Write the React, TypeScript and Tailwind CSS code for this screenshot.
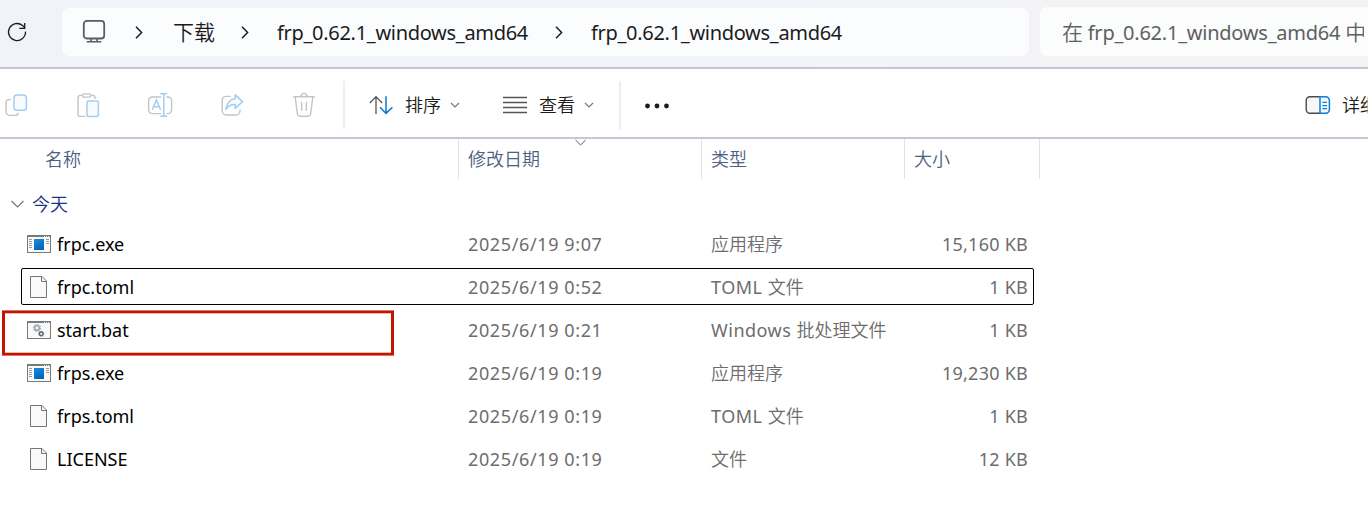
import type { ReactNode } from "react";

const latin = "font-['Noto_Sans','Noto_Sans_CJK_SC',sans-serif]";

function Svg({ w, h, className = "", children }: { w: number; h: number; className?: string; children: ReactNode }) {
  return (
    <svg width={w} height={h} viewBox={`0 0 ${w} ${h}`} fill="none" className={`shrink-0 ${className}`}>
      {children}
    </svg>
  );
}

const GRAY = "#c4c4c4";
const BLUE = "#a3cdf0";

function Refresh() {
  return (
    <Svg w={22} h={22}>
      <path d="M19.5 10.6A8.5 8.5 0 1 1 16.6 4.6L18.8 6.8" stroke="#1b1b1b" strokeWidth="1.3" />
      <path d="M18.7 2V7.3H13.3" stroke="#1b1b1b" strokeWidth="1.3" />
    </Svg>
  );
}

function Monitor() {
  return (
    <Svg w={24} h={24}>
      <rect x="1.8" y="1.9" width="20.4" height="17.6" rx="3" stroke="#5c5c5c" strokeWidth="1.8" />
      <path d="M9 20V22.6M15 20V22.6M4.8 22.8H19.2" stroke="#5c5c5c" strokeWidth="1.6" />
    </Svg>
  );
}

function Crumb() {
  return (
    <Svg w={8} h={14}>
      <path d="M1 1.8L6.6 7.6L1 13.2" stroke="#1b1b1b" strokeWidth="1.5" />
    </Svg>
  );
}

function Copy() {
  return (
    <Svg w={28} h={28}>
      <path d="M9 8.6H7.2A3.2 3.2 0 0 0 4 11.8V20.6A3.8 3.8 0 0 0 7.8 24.4H13.2A3.2 3.2 0 0 0 16.2 22" stroke={GRAY} strokeWidth="1.4" />
      <rect x="12" y="4" width="12.4" height="15.2" rx="3" stroke={BLUE} strokeWidth="1.5" fill="#f8fbfe" />
    </Svg>
  );
}

function Paste() {
  return (
    <Svg w={28} h={28}>
      <path d="M8.4 4.4H6.2A2.2 2.2 0 0 0 4 6.6V23.4A2 2 0 0 0 6 25.4H11.6M17 4.4H18.9A2.2 2.2 0 0 1 21 6.6V8" stroke={GRAY} strokeWidth="1.4" />
      <rect x="8.5" y="2.8" width="8.4" height="3.4" rx="1.7" stroke={GRAY} strokeWidth="1.3" />
      <rect x="13" y="10" width="11.4" height="15.4" rx="1.8" stroke={BLUE} strokeWidth="1.5" fill="#f8fbfe" />
    </Svg>
  );
}

function Rename() {
  return (
    <Svg w={28} h={28}>
      <path d="M15.2 6H6.4A3.8 3.8 0 0 0 2.6 9.8V18.8A3.8 3.8 0 0 0 6.4 22.6H15.2M20.4 6H21.8A3.8 3.8 0 0 1 25.6 9.8V18.8A3.8 3.8 0 0 1 21.8 22.6H20.4" stroke={GRAY} strokeWidth="1.4" />
      <path d="M6.2 18.8L10.4 9L14.6 18.8M7.6 15.8H13.2M17.8 3V25M14.2 2.7H21.2M14.2 25.3H21.2" stroke={BLUE} strokeWidth="1.5" />
    </Svg>
  );
}

function Share() {
  return (
    <Svg w={28} h={28}>
      <path d="M12.6 5.4H8A4 4 0 0 0 4.2 9.4V20A4 4 0 0 0 8.2 24H18A4 4 0 0 0 22 20V18.6" stroke={GRAY} strokeWidth="1.4" />
      <path d="M17.2 3.9L24.5 10.6L17.2 17.4V13.6C13 13.4 10.5 14.6 8 18.4C8.4 12.4 12 8 17.2 7.7Z" stroke={BLUE} strokeWidth="1.5" strokeLinejoin="round" fill="#f8fbfe" />
    </Svg>
  );
}

function Trash() {
  return (
    <Svg w={28} h={28}>
      <path d="M3.2 5.8H24.8M11 5.4A3 3 0 0 1 17 5.4M5.2 6L7.4 23A2.6 2.6 0 0 0 10 25.2H18A2.6 2.6 0 0 0 20.6 23L22.8 6M11.6 11V20M16.4 11V20" stroke={GRAY} strokeWidth="1.4" />
    </Svg>
  );
}

function Sort() {
  return (
    <Svg w={24} h={20}>
      <path d="M7 19V2M0.8 8L7 1.6L13.2 8" stroke="#555" strokeWidth="1.3" />
      <path d="M17 1.2V18M11 12.2L17 18.4L23.4 12.2" stroke="#0b78d0" strokeWidth="1.5" />
    </Svg>
  );
}

function Lines() {
  return (
    <Svg w={24} h={18}>
      <path d="M0 1.5H24M0 6.5H24M0 11.5H24M0 16.5H24" stroke="#555" strokeWidth="1.3" />
    </Svg>
  );
}

function SmallChevron() {
  return (
    <Svg w={10} h={8}>
      <path d="M1 2L5 6L9 2" stroke="#767676" strokeWidth="1.1" />
    </Svg>
  );
}

function Details() {
  return (
    <Svg w={26} h={20}>
      <path d="M15 1.7H5A3.8 3.8 0 0 0 1.2 5.5V14.5A3.8 3.8 0 0 0 5 18.3H15" stroke="#4a4a4a" strokeWidth="1.4" fill="#f7f7f7" />
      <path d="M15 1.7H20.6A3.8 3.8 0 0 1 24.4 5.5V14.5A3.8 3.8 0 0 1 20.6 18.3H15Z" stroke="#0f7fd6" strokeWidth="1.5" fill="#f5faff" />
      <path d="M17.4 7.4H22M17.4 10.6H22M17.4 13.6H22" stroke="#0f7fd6" strokeWidth="1.1" />
    </Svg>
  );
}

function ExeIcon() {
  return (
    <Svg w={24} h={18}>
      <defs>
        <linearGradient id="exe" x1="0" y1="0" x2="0.5" y2="1">
          <stop offset="0" stopColor="#168fe3" />
          <stop offset="1" stopColor="#0765b8" />
        </linearGradient>
      </defs>
      <rect x="0.5" y="0.5" width="23" height="17" fill="#f9f9f9" stroke="#7a7a7a" />
      <path d="M0 1H24" stroke="#7a7a7a" strokeWidth="2" />
      <path d="M17 1.5H18M19 1.5H20M21 1.5H22" stroke="#e8e8e8" />
      <rect x="7" y="4" width="10" height="11" fill="url(#exe)" />
      <path d="M2 4.5H5M2 6.5H5M2 8.5H5M2 10.5H5M2 12.5H5M19 4.5H22M19 6.5H22M19 8.5H22" stroke="#9a9a9a" />
    </Svg>
  );
}

function BatIcon() {
  return (
    <Svg w={24} h={18}>
      <rect x="0.5" y="0.5" width="23" height="17" fill="#f9f9f9" stroke="#7a7a7a" />
      <path d="M0 1H24" stroke="#7a7a7a" strokeWidth="2" />
      <path d="M17 1.5H18M19 1.5H20M21 1.5H22" stroke="#e8e8e8" />
      <circle cx="10" cy="7" r="2.3" stroke="#a3abb3" strokeWidth="1.8" />
      <circle cx="10" cy="7" r="3.5" stroke="#a3abb3" strokeWidth="1.2" strokeDasharray="1.37 1.38" />
      <circle cx="14.2" cy="12.8" r="1.8" stroke="#5f686c" strokeWidth="1.4" />
      <circle cx="14.2" cy="12.8" r="2.6" stroke="#5f686c" strokeWidth="0.8" strokeDasharray="1.02 1.02" />
    </Svg>
  );
}

function FileIcon() {
  return (
    <Svg w={18} h={22} className="ml-[3px]">
      <path d="M0.5 0.5H12L16.5 5V21.5H0.5Z" fill="#f9f9f9" stroke="#757575" />
      <path d="M11.5 0.5V5.5H16.5" stroke="#757575" />
    </Svg>
  );
}

type Row = { icon: "exe" | "bat" | "file"; name: string; date: string; prefix?: string; type: string; size: string };

const rows: Row[] = [
  { icon: "exe", name: "frpc.exe", date: "2025/6/19 9:07", type: "应用程序", size: "15,160 KB" },
  { icon: "file", name: "frpc.toml", date: "2025/6/19 0:52", prefix: "TOML ", type: "文件", size: "1 KB" },
  { icon: "bat", name: "start.bat", date: "2025/6/19 0:21", prefix: "Windows ", type: "批处理文件", size: "1 KB" },
  { icon: "exe", name: "frps.exe", date: "2025/6/19 0:19", type: "应用程序", size: "19,230 KB" },
  { icon: "file", name: "frps.toml", date: "2025/6/19 0:19", prefix: "TOML ", type: "文件", size: "1 KB" },
  { icon: "file", name: "LICENSE", date: "2025/6/19 0:19", type: "文件", size: "12 KB" },
];

function FileRow({ row, focused, marked }: { row: Row; focused: boolean; marked: boolean }) {
  return (
    <div className="relative flex h-[43px] items-center text-[18px] text-[#6d6d6d]">
      {focused && <div className="absolute top-[3px] left-[21px] h-[37px] w-[1013px] rounded-[2px] border border-black" />}
      {marked && (
        <div className="absolute top-[2px] left-[2px] h-[46px] w-[392px] border-y border-[#dd7466]">
          <div className="h-full border-x-[3px] border-y-2 border-[#bf1800]">
            <div className="h-full border-y border-[#f3b5ae]" />
          </div>
        </div>
      )}
      <div className="flex w-[468px] items-center text-black">
        <div className="flex w-[57px] pl-[27px]">
          {row.icon === "exe" && <ExeIcon />}
          {row.icon === "bat" && <BatIcon />}
          {row.icon === "file" && <FileIcon />}
        </div>
        <span>{row.name}</span>
      </div>
      <span className="w-[243px] tracking-[0.62px]">{row.date}</span>
      <span className="w-[193px] font-[350] whitespace-pre">
        {row.prefix && <span className="font-normal tracking-[0.5px]">{row.prefix}</span>}
        {row.type}
      </span>
      <span className="w-[124px] text-right tracking-[0.25px]">{row.size}</span>
    </div>
  );
}

export default function App() {
  return (
    <div className={`flex h-[514px] w-[1368px] flex-col overflow-hidden bg-white leading-none whitespace-nowrap ${latin}`}>
      <div className="flex h-[69px] shrink-0 border-b-2 border-[#c2c8d8] bg-gradient-to-r from-[#f1f3f8] via-[#f2f3f9] to-[#f3f3f3]">
        <div className="flex w-[62px] items-center pb-[3px] pl-[6px]">
          <Refresh />
        </div>
        <div className="mt-2 flex h-12 w-[967px] items-center rounded-[7px] bg-[#fbfcfe] text-[21px] text-[#1b1b1b]">
          <div className="flex w-[73px] pb-0.5 pl-5">
            <Monitor />
          </div>
          <Crumb />
          <span className="ml-[30px] w-[68px] pt-px font-[350]">下载</span>
          <Crumb />
          <span className="ml-[28px] w-[278px] pt-0.5 text-[20px] font-[380] tracking-[-0.3px]">frp_0.62.1_windows_amd64</span>
          <Crumb />
          <span className="ml-[28px] pt-0.5 text-[20px] font-[380] tracking-[-0.3px]">frp_0.62.1_windows_amd64</span>
        </div>
        <div className="mt-[7px] ml-[11px] flex h-[49px] w-[328px] items-center overflow-hidden rounded-l-[7px] bg-[#fbfcfc] pl-[22px] text-[20px] text-[#606060]">
          <span className="w-[302px] overflow-hidden pt-[10px] pb-2 font-[380] tracking-[-0.24px]">
            <span className="text-[21px] font-[350]">在</span> frp_0.62.1_windows_amd64 <span className="text-[21px] font-[350]">中</span>
          </span>
        </div>
      </div>

      <div className="flex h-[70px] shrink-0 items-center border-b-2 border-[#c2c8d8] text-[18px] text-[#1b1b1b]">
        <div className="flex w-[343px] shrink-0 gap-11 pt-1 pl-[2px]">
          <Copy />
          <Paste />
          <Rename />
          <Share />
          <Trash />
        </div>
        <div className="mt-1 h-12 w-0.5 shrink-0 bg-[#eeeeee]" />
        <div className="flex w-[274px] shrink-0 items-center pt-[3px] pl-6">
          <Sort />
          <span className="mr-[9px] ml-[12px] font-[350]">排序</span>
          <SmallChevron />
          <div className="w-[43px]" />
          <Lines />
          <span className="mr-[9px] ml-[12px] font-[350]">查看</span>
          <SmallChevron />
        </div>
        <div className="mt-1 h-12 w-0.5 shrink-0 bg-[#eeeeee]" />
        <div className="flex w-[684px] shrink-0 items-center pt-[5px] pl-6">
          <Svg w={26} h={8}>
            <circle cx="2.5" cy="4" r="2.4" fill="#1b1b1b" />
            <circle cx="12" cy="4" r="2.4" fill="#1b1b1b" />
            <circle cx="21.5" cy="4" r="2.4" fill="#1b1b1b" />
          </Svg>
        </div>
        <div className="flex items-center gap-[11px] pt-[3px]">
          <Details />
          <span className="font-[350]">详细</span>
        </div>
      </div>

      <div className="relative flex h-10 shrink-0 items-center text-[18px] font-[350] text-[#4c607f]">
        <div className="h-10 w-[459px] border-r border-[#e2e2e2] pt-[11px] pl-[45px]">名称</div>
        <div className="h-10 w-[243px] border-r border-[#e2e2e2] pt-[11px] pl-[9px]">修改日期</div>
        <div className="h-10 w-[203px] border-r border-[#e2e2e2] pt-[11px] pl-[9px]">类型</div>
        <div className="h-10 w-[135px] border-r border-[#e2e2e2] pt-[11px] pl-[9px]">大小</div>
        <Svg w={12} h={8} className="absolute top-0 left-[575px]">
          <path d="M0.5 1L5.6 6L10.7 1" stroke="#5f5f5f" strokeWidth="1" />
        </Svg>
      </div>

      <div className="flex h-[43px] shrink-0 items-center pt-[6px] pl-[11px] text-[18px] font-[350] text-[#1e3287]">
        <Svg w={13} h={8}>
          <path d="M0.5 1L6.5 7L12.5 1" stroke="#757575" strokeWidth="1.2" />
        </Svg>
        <span className="ml-2">今天</span>
      </div>

      <div>
        {rows.map((r, i) => (
          <FileRow key={r.name} row={r} focused={i === 1} marked={i === 2} />
        ))}
      </div>
    </div>
  );
}
